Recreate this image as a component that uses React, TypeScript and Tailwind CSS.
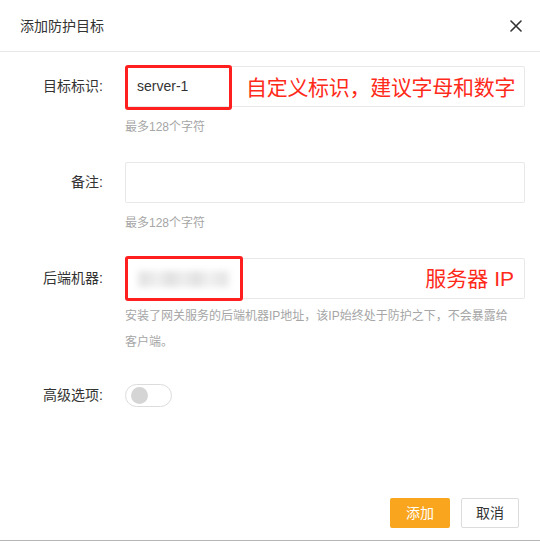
import React from "react";

const FONT = '"Liberation Sans", "Noto Sans CJK SC", sans-serif';

function Label({ children }: { children: React.ReactNode }) {
  return (
    <div className="w-[103px] shrink-0 text-right text-[14px] leading-[41px] text-[#333]">
      {children}
    </div>
  );
}

export default function App() {
  const blur = ["#e6e6e6", "#eeeeee", "#e3e3e3", "#ececec", "#e4e4e4", "#efefef", "#e8e8e8"];
  return (
    <div
      className="w-[540px] h-[541px] bg-white flex flex-col border-b border-[#b5b5b5]"
      style={{ fontFamily: FONT }}
    >
      {/* Header */}
      <div className="h-[52px] shrink-0 border-b border-[#e8e8e8] flex items-center justify-between pl-[20px] pr-[18px]">
        <span className="text-[14px] text-[#333] leading-none">添加防护目标</span>
        <svg width="12" height="12" viewBox="0 0 12 12">
          <path d="M1 1L11 11M11 1L1 11" stroke="#333" strokeWidth="1.6" strokeLinecap="round" />
        </svg>
      </div>

      {/* Body */}
      <div className="flex-1 flex flex-col pt-[14px]">
        {/* Row 1 */}
        <div className="flex gap-[22px]">
          <Label>目标标识:</Label>
          <div className="w-[400px] flex flex-col">
            <div className="relative h-[41px] border border-[#e8e8e8] rounded-[2px] flex items-center">
              <div className="absolute left-[-1px] top-[-2px] w-[107px] h-[45px] border-[3px] border-[#ff1f1f] rounded-[3px]" />
              <span className="pl-[11px] text-[14px] text-[#333]">server-1</span>
              <span className="absolute left-[120px] top-[8px] text-[21px] leading-[26px] text-[#ff2a1a] whitespace-nowrap tracking-[-0.3px]">
                自定义标识，建议字母和数字
              </span>
            </div>
            <div className="mt-[7px] text-[12px] leading-[26px] text-[#a6a6a6]">最多128个字符</div>
          </div>
        </div>

        {/* Row 2 */}
        <div className="flex gap-[22px] mt-[22px]">
          <Label>备注:</Label>
          <div className="w-[400px] flex flex-col">
            <div className="h-[41px] border border-[#e8e8e8] rounded-[2px]" />
            <div className="mt-[7px] text-[12px] leading-[26px] text-[#a6a6a6]">最多128个字符</div>
          </div>
        </div>

        {/* Row 3 */}
        <div className="flex gap-[22px] mt-[22px]">
          <Label>后端机器:</Label>
          <div className="w-[400px] flex flex-col">
            <div className="relative h-[41px] border border-[#e8e8e8] rounded-[2px] flex items-center">
              <div className="absolute left-[-1px] top-[-3px] w-[118px] h-[45px] border-[3px] border-[#ff1f1f] rounded-[3px]" />
              <div className="ml-[12px] flex h-[16px] blur-[3px]">
                {blur.map((c, i) => (
                  <div key={i} className="w-[13px] h-[16px]" style={{ backgroundColor: c }} />
                ))}
              </div>
              <span className="absolute right-[10px] top-[7px] text-[21px] leading-[26px] text-[#ff2a1a] whitespace-nowrap">
                服务器 IP
              </span>
            </div>
            <div className="mt-[4px] w-[392px] text-[12px] leading-[26px] text-[#a6a6a6]">
              安装了网关服务的后端机器IP地址，该IP始终处于防护之下，不会暴露给客户端。
            </div>
          </div>
        </div>

        {/* Row 4 */}
        <div className="flex gap-[22px] mt-[20px] items-center">
          <Label>高级选项:</Label>
          <div className="w-[47px] h-[23px] rounded-full border border-[#dcdcdc] bg-white flex items-center pl-[5px]">
            <div className="w-[17px] h-[17px] rounded-full bg-[#d5d5d5]" />
          </div>
        </div>
      </div>

      {/* Footer */}
      <div className="flex justify-end gap-[11px] pr-[21px] pb-[12px]">
        <button className="w-[60px] h-[30px] rounded-[2px] bg-[#f9a61e] text-white text-[14px]">添加</button>
        <button className="w-[58px] h-[30px] rounded-[2px] border border-[#dcdcdc] bg-white text-[#333] text-[14px]">
          取消
        </button>
      </div>
    </div>
  );
}
